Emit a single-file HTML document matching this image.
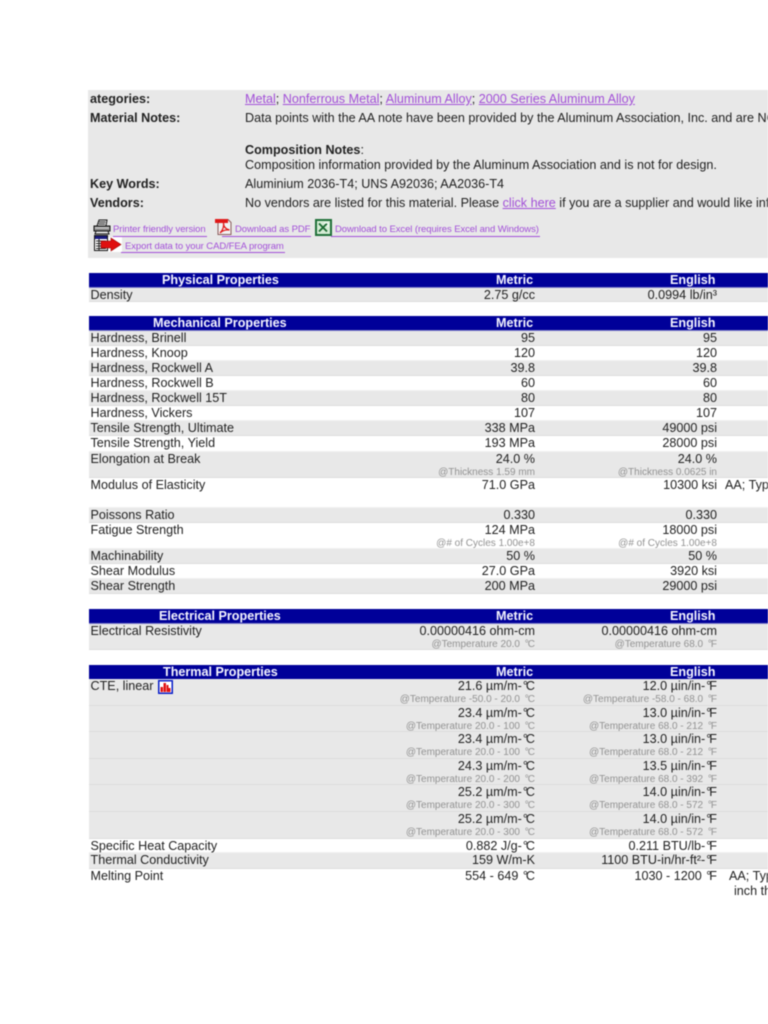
<!DOCTYPE html>
<html><head><meta charset="utf-8"><title>Aluminum 2036-T4</title>
<style>
html,body{margin:0;padding:0;background:#fff}
#p{position:relative;width:768px;height:1024px;overflow:hidden;font:12.6px/15px "Liberation Sans",Arial,sans-serif;color:#222;filter:blur(.42px)}
#p div,#p span.a,#p a.a{position:absolute;white-space:nowrap}
.r{left:89px;width:679px}
.g{background:#e8e8e8;box-shadow:inset 0 -1px #dcdcdc}
.w{box-shadow:inset 0 -1px #f2f2f2}
.h{left:89px;width:679px;height:14px;background:#000099;color:#f4f4ff;font-weight:bold;line-height:14px;box-shadow:0 1px #7f7fc8}
.n{left:1.5px;top:0}
.m{right:233px;top:0}
.e{right:51px;top:0}
#p .s{font-size:10px;line-height:12px;color:#929292;top:15px}
.m.s{right:233px}.e.s{right:51px}
.x{left:636px;top:0}
.b{font-weight:bold}
a{color:#a24fd8;text-decoration:underline}
a.sm{font-size:9.5px;line-height:12px;letter-spacing:-.08px;text-decoration:none}
.u{height:1px;background:#a24fd8}
svg{position:absolute;display:block}
i{font-style:normal;margin:0 -2px 0 1px}
.s i{margin:0 -1px 0 2px}
</style></head><body><div id="p">

<div style="left:88px;top:90px;width:680px;height:168px;background:#e8e8e8"></div>
<div class="b" style="left:90px;top:92px">ategories:</div>
<div class="b" style="left:90px;top:111px">Material Notes:</div>
<div class="b" style="left:90px;top:177px">Key Words:</div>
<div class="b" style="left:90px;top:196px">Vendors:</div>
<div style="left:245px;top:92px"><a href="#">Metal</a>; <a href="#">Nonferrous Metal</a>; <a href="#">Aluminum Alloy</a>; <a href="#">2000 Series Aluminum Alloy</a></div>
<div style="left:245px;top:111px">Data points with the AA note have been provided by the Aluminum Association, Inc. and are NOT FOR DESIGN.</div>
<div style="left:245px;top:143px"><b>Composition Notes</b>:</div>
<div style="left:245px;top:158px">Composition information provided by the Aluminum Association and is not for design.</div>
<div style="left:245px;top:177px">Aluminium 2036-T4; UNS A92036; AA2036-T4</div>
<div style="left:245px;top:196px">No vendors are listed for this material. Please <a href="#">click here</a> if you are a supplier and would like information.</div>

<svg style="left:93px;top:219px" width="18" height="18" viewBox="0 0 18 18"><path d="M6 1h8l-1 6H4z" fill="#eee" stroke="#111"/><path d="M6 3h6.500M5.500 5h6.500" stroke="#222"/><rect x="1" y="7" width="16" height="5" fill="#888" stroke="#111"/><path d="M2 9h14" stroke="#ddd"/><path d="M3 12h12l1 3H2z" fill="#ddd" stroke="#111"/></svg>
<a class="a sm" href="#" style="left:113px;top:224px">Printer friendly version</a>
<div class="u" style="left:113px;top:236px;width:94px"></div>

<svg style="left:214px;top:218px" width="19" height="18" viewBox="0 0 19 18"><path d="M4 1.500h10l3 3v12H4z" fill="#f2f2f2" stroke="#8a5a5a"/><rect x="1" y="1" width="13" height="4" fill="#e01818"/><path d="M6 15c3-3 4-7 3.500-10 0 4 2 6 6 7-4-.5-7 .500-9.500 3z" fill="none" stroke="#e01818" stroke-width="1.300"/></svg>
<div class="u" style="left:222px;top:236px;width:89px"></div>
<a class="a sm" href="#" style="left:235px;top:224px">Download as PDF</a>

<svg style="left:315px;top:219px" width="17" height="17" viewBox="0 0 17 17"><rect x="1" y="1" width="15" height="15" fill="#d4ecd4" stroke="#1f7038" stroke-width="2"/><path d="M4 4.500l8 8M12 4.500l-8 8" stroke="#1a6a30" stroke-width="1.800"/><path d="M9 4h4v4" stroke="#fff" fill="none"/></svg>
<div class="u" style="left:331px;top:236px;width:209px"></div>
<a class="a sm" href="#" style="left:335px;top:224px">Download to Excel (requires Excel and Windows)</a>

<svg style="left:94px;top:235px" width="28" height="18" viewBox="0 0 28 18"><path d="M14 2h14v15H14z" fill="#fff"/><rect x=".5" y=".5" width="13" height="15" fill="#fff" stroke="#111"/><rect x="1" y="1" width="12" height="3" fill="#1a1a80"/><path d="M2 6h10M2 8.500h10M2 11h10M2 13.500h10M5 4v11" stroke="#222"/><path d="M7 6h10V3l10 6.500L17 16v-3H7z" fill="#e01010" stroke="#900" stroke-width=".6"/></svg>
<div class="u" style="left:121px;top:252px;width:164px"></div>
<a class="a sm" href="#" style="left:125px;top:241px">Export data to your CAD/FEA program</a>

<!-- Physical -->
<div class="h" style="top:273px"><span class="a" style="left:73px">Physical Properties</span><span class="a" style="left:407px">Metric</span><span class="a" style="left:581px">English</span></div>
<div class="r g" style="top:288px;height:14px"><span class="a n">Density</span><span class="a m">2.75 g/cc</span><span class="a e">0.0994 lb/in³</span></div>

<!-- Mechanical -->
<div class="h" style="top:316px"><span class="a" style="left:64px">Mechanical Properties</span><span class="a" style="left:407px">Metric</span><span class="a" style="left:581px">English</span></div>
<div class="r g" style="top:331px;height:15px"><span class="a n">Hardness, Brinell</span><span class="a m">95</span><span class="a e">95</span></div>
<div class="r w" style="top:346px;height:15px"><span class="a n">Hardness, Knoop</span><span class="a m">120</span><span class="a e">120</span></div>
<div class="r g" style="top:361px;height:15px"><span class="a n">Hardness, Rockwell A</span><span class="a m">39.8</span><span class="a e">39.8</span></div>
<div class="r w" style="top:376px;height:15px"><span class="a n">Hardness, Rockwell B</span><span class="a m">60</span><span class="a e">60</span></div>
<div class="r g" style="top:391px;height:15px"><span class="a n">Hardness, Rockwell 15T</span><span class="a m">80</span><span class="a e">80</span></div>
<div class="r w" style="top:406px;height:15px"><span class="a n">Hardness, Vickers</span><span class="a m">107</span><span class="a e">107</span></div>
<div class="r g" style="top:421px;height:15px"><span class="a n">Tensile Strength, Ultimate</span><span class="a m">338 MPa</span><span class="a e">49000 psi</span></div>
<div class="r w" style="top:436px;height:16px"><span class="a n">Tensile Strength, Yield</span><span class="a m">193 MPa</span><span class="a e">28000 psi</span></div>
<div class="r g" style="top:452px;height:26px"><span class="a n">Elongation at Break</span><span class="a m">24.0 %</span><span class="a e">24.0 %</span><span class="a m s">@Thickness 1.59 mm</span><span class="a e s">@Thickness 0.0625 in</span></div>
<div class="r w" style="top:478px;height:30px"><span class="a n">Modulus of Elasticity</span><span class="a m">71.0 GPa</span><span class="a e">10300 ksi</span><span class="a x">AA; Typical; Average of tension and compression</span></div>
<div class="r g" style="top:508px;height:15px"><span class="a n">Poissons Ratio</span><span class="a m">0.330</span><span class="a e">0.330</span></div>
<div class="r w" style="top:523px;height:26px"><span class="a n">Fatigue Strength</span><span class="a m">124 MPa</span><span class="a e">18000 psi</span><span class="a m s">@# of Cycles 1.00e+8</span><span class="a e s">@# of Cycles 1.00e+8</span></div>
<div class="r g" style="top:549px;height:15px"><span class="a n">Machinability</span><span class="a m">50 %</span><span class="a e">50 %</span></div>
<div class="r w" style="top:564px;height:15px"><span class="a n">Shear Modulus</span><span class="a m">27.0 GPa</span><span class="a e">3920 ksi</span></div>
<div class="r g" style="top:579px;height:15px"><span class="a n">Shear Strength</span><span class="a m">200 MPa</span><span class="a e">29000 psi</span></div>

<!-- Electrical -->
<div class="h" style="top:609px"><span class="a" style="left:70px">Electrical Properties</span><span class="a" style="left:407px">Metric</span><span class="a" style="left:581px">English</span></div>
<div class="r g" style="top:624px;height:26px"><span class="a n">Electrical Resistivity</span><span class="a m">0.00000416 ohm-cm</span><span class="a e">0.00000416 ohm-cm</span><span class="a m s">@Temperature 20.0 <i>°</i>C</span><span class="a e s">@Temperature 68.0 <i>°</i>F</span></div>

<!-- Thermal -->
<div class="h" style="top:665px"><span class="a" style="left:74px">Thermal Properties</span><span class="a" style="left:407px">Metric</span><span class="a" style="left:581px">English</span></div>
<div class="r g" style="top:679px;height:27px"><span class="a n">CTE, linear</span><span class="a m">21.6 µm/m-<i>°</i>C</span><span class="a e">12.0 µin/in-<i>°</i>F</span><span class="a m s">@Temperature -50.0 - 20.0 <i>°</i>C</span><span class="a e s">@Temperature -58.0 - 68.0 <i>°</i>F</span>
<svg style="left:69px;top:1px" width="15" height="14" viewBox="0 0 15 14"><rect x=".75" y=".75" width="13.500" height="12.500" fill="#fff" stroke="#0a1ec8" stroke-width="1.500"/><path d="M2.500 12V7h2.500v5zM5.500 12V3h2.500v9zM8.500 12V5h2v7zM10.500 12V8h2v4z" fill="#e01010"/></svg></div>
<div class="r g" style="top:706px;height:26px"><span class="a m">23.4 µm/m-<i>°</i>C</span><span class="a e">13.0 µin/in-<i>°</i>F</span><span class="a m s">@Temperature 20.0 - 100 <i>°</i>C</span><span class="a e s">@Temperature 68.0 - 212 <i>°</i>F</span></div>
<div class="r g" style="top:732px;height:27px"><span class="a m">23.4 µm/m-<i>°</i>C</span><span class="a e">13.0 µin/in-<i>°</i>F</span><span class="a m s">@Temperature 20.0 - 100 <i>°</i>C</span><span class="a e s">@Temperature 68.0 - 212 <i>°</i>F</span></div>
<div class="r g" style="top:759px;height:26px"><span class="a m">24.3 µm/m-<i>°</i>C</span><span class="a e">13.5 µin/in-<i>°</i>F</span><span class="a m s">@Temperature 20.0 - 200 <i>°</i>C</span><span class="a e s">@Temperature 68.0 - 392 <i>°</i>F</span></div>
<div class="r g" style="top:785px;height:27px"><span class="a m">25.2 µm/m-<i>°</i>C</span><span class="a e">14.0 µin/in-<i>°</i>F</span><span class="a m s">@Temperature 20.0 - 300 <i>°</i>C</span><span class="a e s">@Temperature 68.0 - 572 <i>°</i>F</span></div>
<div class="r g" style="top:812px;height:27px"><span class="a m">25.2 µm/m-<i>°</i>C</span><span class="a e">14.0 µin/in-<i>°</i>F</span><span class="a m s">@Temperature 20.0 - 300 <i>°</i>C</span><span class="a e s">@Temperature 68.0 - 572 <i>°</i>F</span></div>
<div class="r w" style="top:839px;height:14px"><span class="a n">Specific Heat Capacity</span><span class="a m">0.882 J/g-<i>°</i>C</span><span class="a e">0.211 BTU/lb-<i>°</i>F</span></div>
<div class="r g" style="top:853px;height:16px"><span class="a n">Thermal Conductivity</span><span class="a m">159 W/m-K</span><span class="a e">1100 BTU-in/hr-ft²-<i>°</i>F</span></div>
<div class="r" style="top:869px;height:30px"><span class="a n">Melting Point</span><span class="a m">554 - 649 <i>°</i>C</span><span class="a e">1030 - 1200 <i>°</i>F</span><span class="a x" style="left:640px">AA; Typical range based on</span><span class="a x" style="left:645px;top:15px">inch thick or greater</span></div>

</div></body></html>
